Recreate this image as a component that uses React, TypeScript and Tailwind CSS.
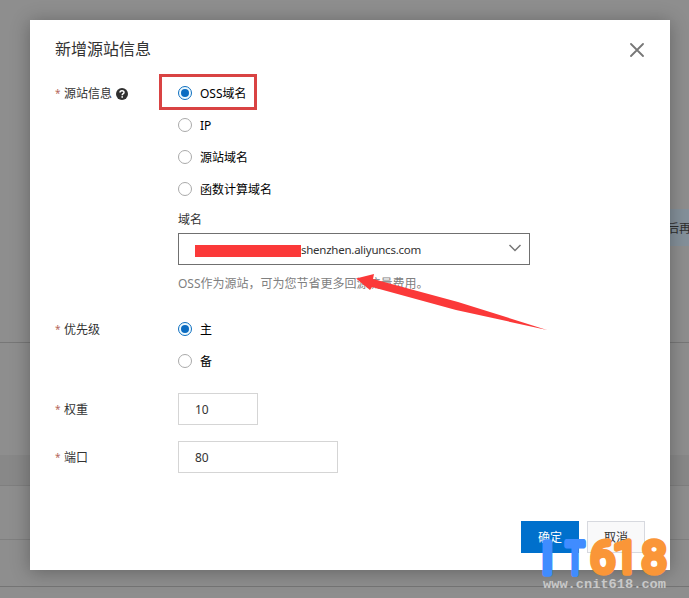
import React, { useState } from 'react';

const ORIGINS = ['OSS域名', 'IP', '源站域名', '函数计算域名'];
const PRIORITIES = ['主', '备'];

function Radio({ label, checked, onSelect }: { label: string; checked: boolean; onSelect: () => void }) {
  return (
    <button onClick={onSelect} className="flex h-8 items-center gap-2 text-black">
      <span
        className={`flex h-3.5 w-3.5 items-center justify-center rounded-full border ${
          checked ? 'border-[#0f6fc0] bg-[#eefaff]' : 'border-[#aaaaaa] bg-white'
        }`}
      >
        {checked && <span className="h-2 w-2 rounded-full bg-[#0b6cc2]" />}
      </span>
      <span className="pt-0.5">{label}</span>
    </button>
  );
}

function Label({ text, help }: { text: string; help?: boolean }) {
  return (
    <div className="flex h-8 w-[123px] shrink-0 items-center pt-0.5">
      <span className="mb-0.5 w-[9px] text-[10px] text-[#b5695c]">*</span>
      <span>{text}</span>
      {help && (
        <svg viewBox="0 0 12 12" className="ml-1 h-3 w-3">
          <circle cx="6" cy="6" r="6" fill="#303030" />
          <path d="M4 4.6C4 2.1 8 2.1 8 4.5C8 5.7 6.2 5.7 6.2 7.2" fill="none" stroke="#fff" strokeWidth="1.5" />
          <rect x="5.4" y="8.2" width="1.6" height="1.5" fill="#fff" />
        </svg>
      )}
    </div>
  );
}

// Dimmed page behind the dialog
function Backdrop() {
  return (
    <div className="absolute inset-0 flex flex-col bg-[#8e8e8e]">
      <div className="h-[209px]" />
      <div className="flex h-[37px] items-center justify-end">
        <div className="flex h-full w-[22px] items-center bg-[#84909a] pt-0.5 whitespace-nowrap text-[#2d2d2d]">后再</div>
      </div>
      <div className="h-[97px] border-b border-[#777777]" />
      <div className="h-[112px]" />
      <div className="h-[31px] border-b border-[#7f7f7f] bg-[#888888]" />
      <div className="h-[54px] border-b border-[#7f7f7f]" />
      <div className="h-[47px] border-b border-[#747474]" />
    </div>
  );
}

function Watermark() {
  return (
    <svg
      viewBox="0 0 149 72"
      className="pointer-events-none absolute left-[540px] top-[526px] h-[72px] w-[149px] overflow-visible"
    >
      <g fontFamily="Roboto, sans-serif" fontSize="45" strokeLinejoin="round" strokeWidth="5.5">
        <g fill="#408cff" stroke="#408cff">
          <text x="1.3" y="47.5">I</text>
          <text x="25.5" y="47.5" textLength="19" lengthAdjust="spacingAndGlyphs" strokeWidth="6">T</text>
        </g>
        <text x="50 73 101.5" y="47" fill="#fa9638" stroke="#fa9638">618</text>
      </g>
      <text
        x="3"
        y="62"
        fontFamily="'Liberation Mono', monospace"
        fontWeight="700"
        fontSize="12.5"
        fill="#c8c8c8"
        textLength="123"
        lengthAdjust="spacingAndGlyphs"
      >
        www.cnit618.com
      </text>
    </svg>
  );
}

export default function App() {
  const [origin, setOrigin] = useState(0);
  const [priority, setPriority] = useState(0);

  return (
    <div className="relative h-[598px] w-[689px] overflow-hidden px-[30px] pt-5 font-['Noto_Sans','Noto_Sans_CJK_SC',sans-serif] text-[12px] leading-[18px] text-[#333333]">
      <Backdrop />

      <div className="relative flex h-[550px] w-[640px] flex-col bg-white px-[25px] shadow-[0_2px_18px_rgba(0,0,0,0.3)]">
        <div className="flex h-[57px] items-center justify-between pt-0.5">
          <h1 className="mb-0.5 text-[16px] leading-6">新增源站信息</h1>
          <button aria-label="关闭" className="mr-px">
            <svg viewBox="0 0 14 14" className="h-3.5 w-3.5">
              <path d="M1 1L13 13M13 1L1 13" stroke="#777" strokeWidth="1.8" strokeLinecap="round" />
            </svg>
          </button>
        </div>

        <div className="flex h-[236px]">
          <Label text="源站信息" help />
          <div className="relative flex w-[352px] flex-col items-start">
            <div className="pointer-events-none absolute -left-[19px] -top-[3px] h-[36px] w-[98px] border-3 border-[#d94343]" />
            {ORIGINS.map((item, i) => (
              <Radio key={item} label={item} checked={origin === i} onSelect={() => setOrigin(i)} />
            ))}
            <div className="mt-1.5">域名</div>
            <div className="mt-1 flex h-8 w-full items-center border border-[#707070] pl-4 pr-[7px]">
              <span className="mt-1 h-3 w-[106px] bg-[#fb3939]" />
              <span className="flex-1 pt-0.5 text-[11.5px] tracking-[-0.25px]">shenzhen.aliyuncs.com</span>
              <svg viewBox="0 0 14 8" className="mb-0.5 h-2 w-3.5">
                <path d="M1.5 1L7 6.5L12.5 1" fill="none" stroke="#777" strokeWidth="1.5" />
              </svg>
            </div>
            <div className="mt-2.5 whitespace-nowrap text-[#808080]">OSS作为源站，可为您节省更多回源流量费用。</div>
            <svg viewBox="0 0 192 58" className="absolute left-[178px] top-[196px] h-[58px] w-[192px]">
              <path d="M0 5.5L18 1L17 6L102 29L191 57L100 37L16 14L14 17Z" fill="#fb3939" />
            </svg>
          </div>
        </div>

        <div className="flex h-20">
          <Label text="优先级" />
          <div className="flex flex-col items-start">
            {PRIORITIES.map((item, i) => (
              <Radio key={item} label={item} checked={priority === i} onSelect={() => setPriority(i)} />
            ))}
          </div>
        </div>

        <div className="flex h-12">
          <Label text="权重" />
          <input defaultValue="10" className="h-8 w-20 border border-[#d5d5d5] px-4 outline-none" />
        </div>
        <div className="flex h-12">
          <Label text="端口" />
          <input defaultValue="80" className="h-8 w-40 border border-[#d5d5d5] px-4 outline-none" />
        </div>

        <div className="mt-8 flex justify-end gap-2">
          <button className="h-8 w-[58px] bg-[#0070cc] pt-0.5 text-white">确定</button>
          <button className="h-8 w-[58px] border border-[#d7d9df] bg-[#f9f9fa] pt-0.5">取消</button>
        </div>
      </div>

      <Watermark />
    </div>
  );
}
